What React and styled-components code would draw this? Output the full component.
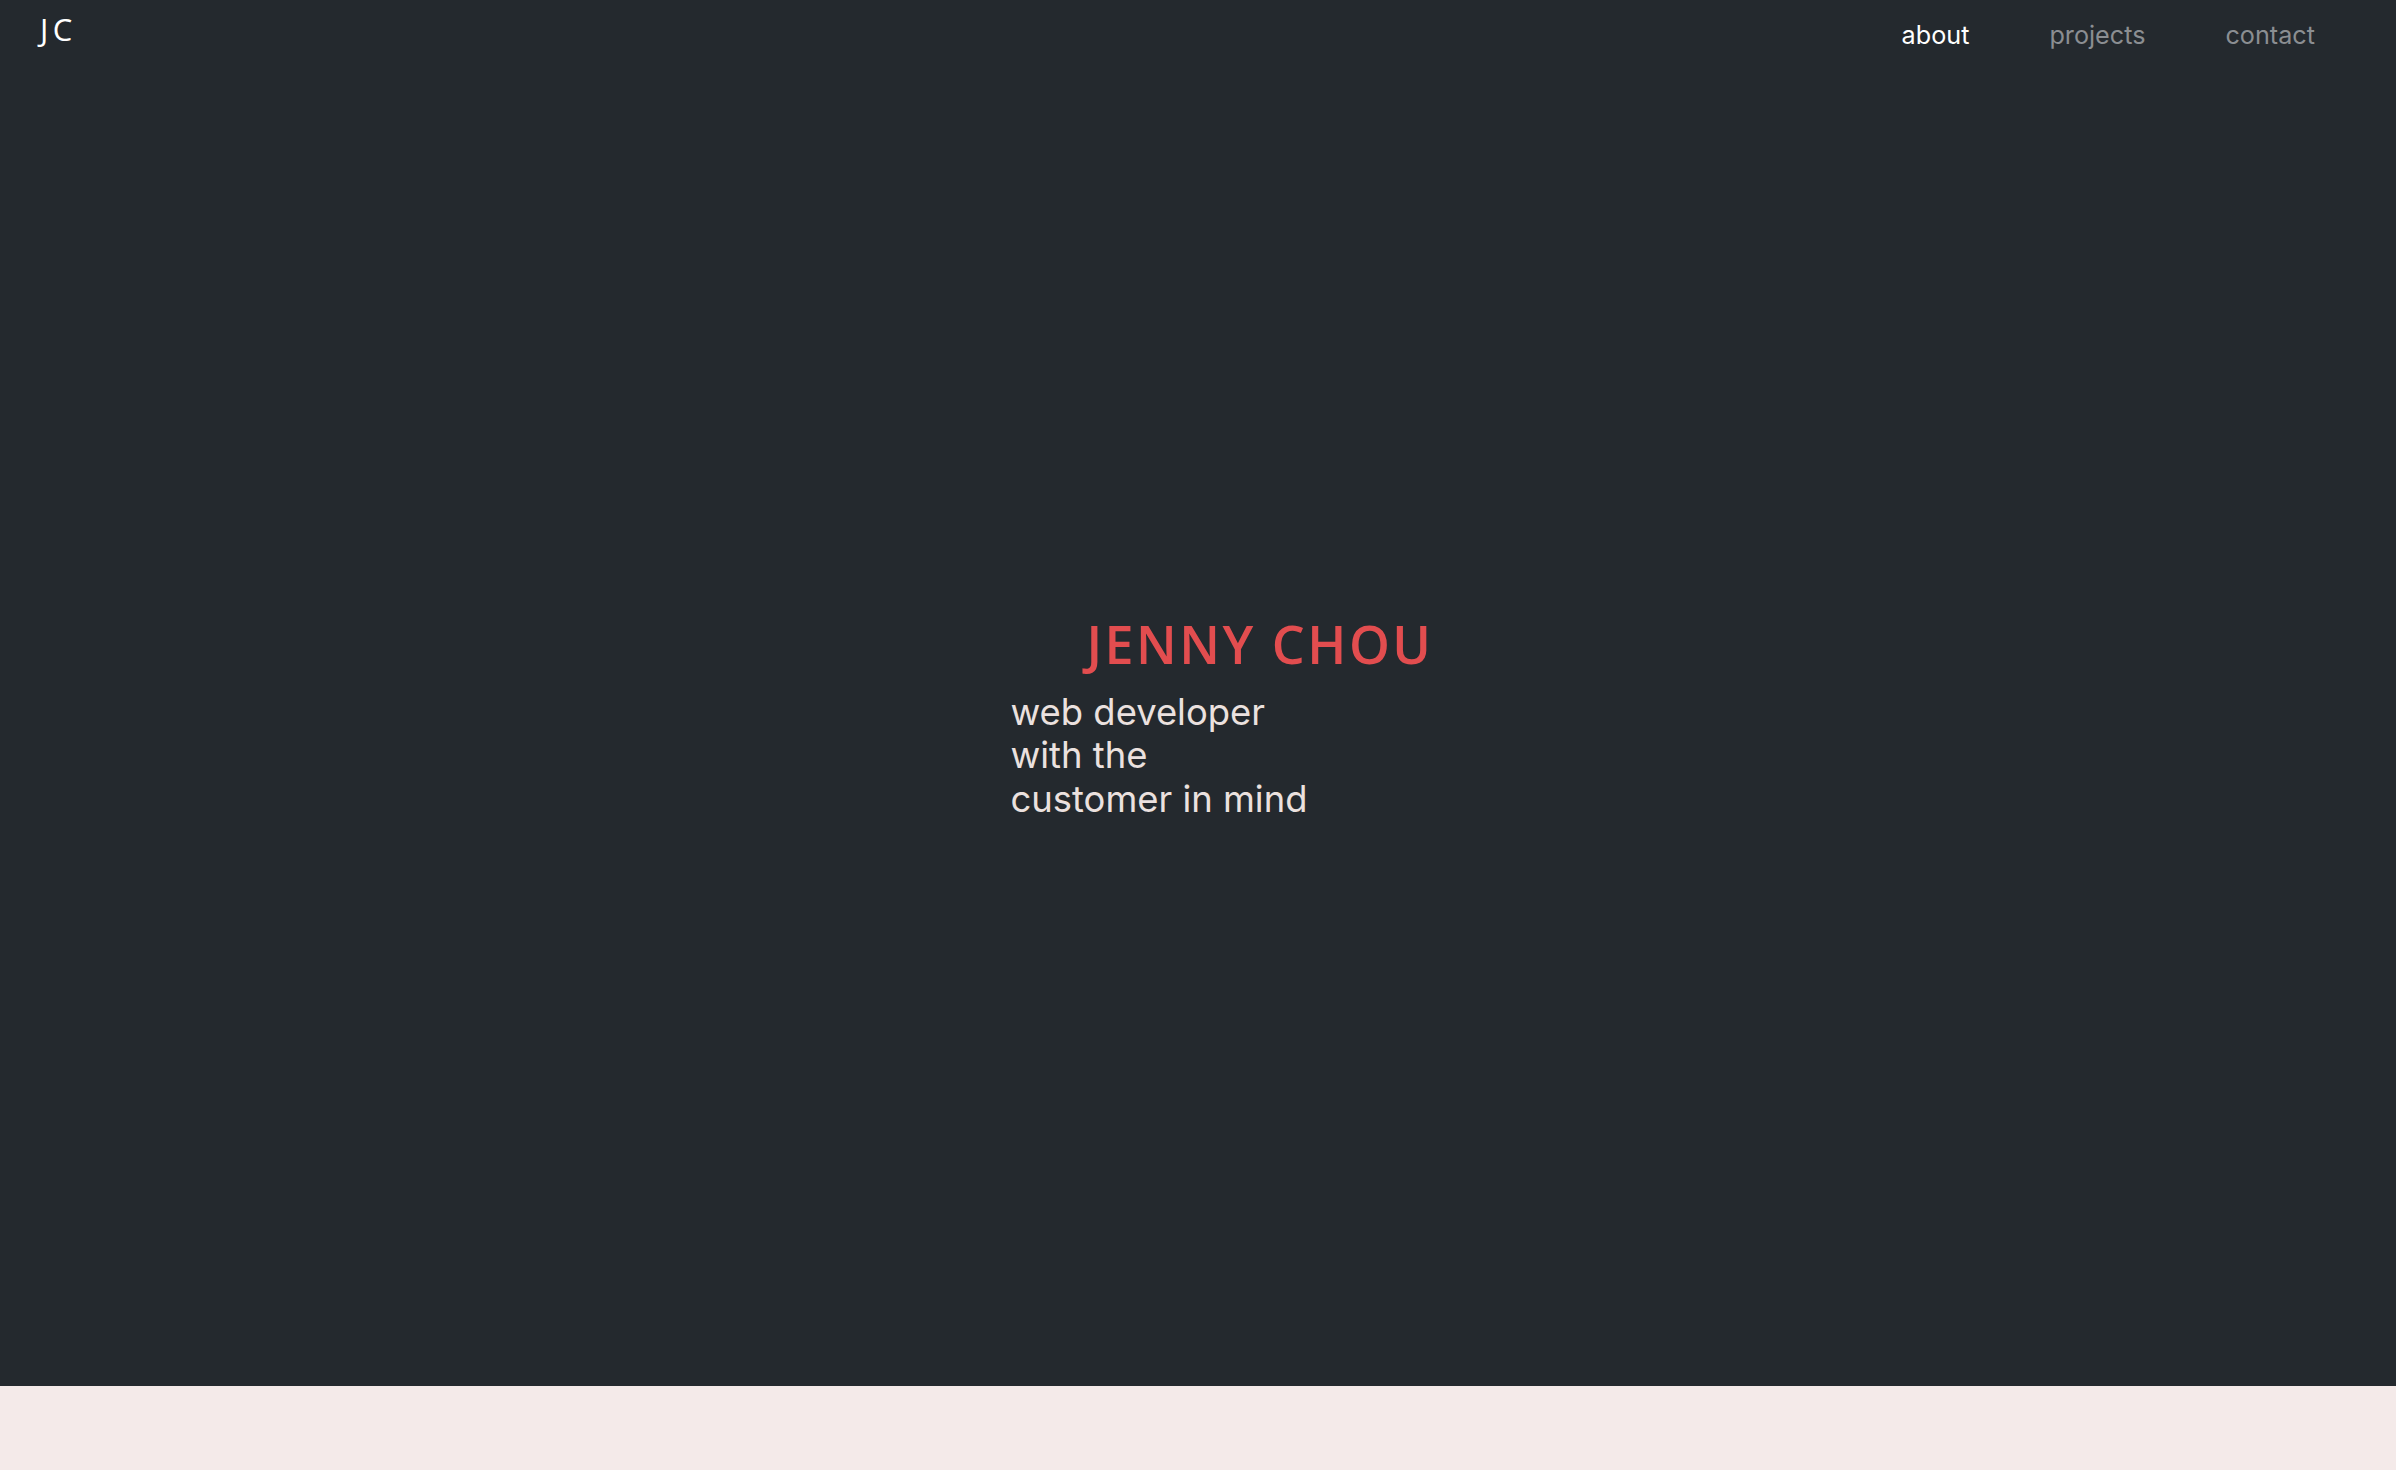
import React from "react";
import styled, { createGlobalStyle } from "styled-components";

const Global = createGlobalStyle`
  html, body { margin: 0; padding: 0; background: #f4eae9; }
  body { font-family: Inter, "Liberation Sans", sans-serif; }
  * { box-sizing: border-box; }
`;

const Page = styled.div`
  display: flex;
  flex-direction: column;
`;

const Hero = styled.section`
  background: #24292e;
  height: 1386px;
  display: flex;
  flex-direction: column;
`;

const Header = styled.header`
  display: flex;
  justify-content: space-between;
  align-items: flex-start;
  padding: 0 41px 0 40px;
  height: 70px;
`;

const Logo = styled.div`
  font-family: "Open Sans", sans-serif;
  font-size: 31px;
  letter-spacing: 4.5px;
  color: #ffffff;
  padding-top: 9px;
  line-height: 40px;
`;

const Nav = styled.nav`
  display: flex;
  padding-top: 17px;
`;

const NavLink = styled.a`
  font-family: Inter, sans-serif;
  font-size: 25.2px;
  line-height: 36px;
  padding: 0 40px;
  color: ${(p) => (p.$active ? "#ffffff" : "#8b8e92")};
  text-decoration: none;
`;

const Center = styled.div`
  flex: 1;
  display: flex;
  justify-content: center;
  align-items: center;
  padding-left: 42px;
  padding-bottom: 26px;
`;

const Intro = styled.div`
  display: flex;
  flex-direction: column;
  width: 417px;
`;

const Name = styled.h1`
  margin: 0 0 12px 76px;
  font-family: "Open Sans", sans-serif;
  font-weight: 600;
  font-size: 52px;
  letter-spacing: 2.5px;
  line-height: 70px;
  color: #e24d4f;
  white-space: nowrap;
`;

const Tagline = styled.p`
  margin: 0;
  font-family: Inter, sans-serif;
  font-size: 36.4px;
  line-height: 43.5px;
  color: #ebe1df;
`;

const Band = styled.section`
  background: #f4eae9;
  height: 84px;
`;

export default function App() {
  return (
    <Page>
      <Global />
      <Hero>
        <Header>
          <Logo>JC</Logo>
          <Nav>
            <NavLink $active href="#">about</NavLink>
            <NavLink href="#">projects</NavLink>
            <NavLink href="#">contact</NavLink>
          </Nav>
        </Header>
        <Center>
          <Intro>
            <Name>JENNY CHOU</Name>
            <Tagline>
              web developer
              <br />
              with the
              <br />
              customer in mind
            </Tagline>
          </Intro>
        </Center>
      </Hero>
      <Band />
    </Page>
  );
}
